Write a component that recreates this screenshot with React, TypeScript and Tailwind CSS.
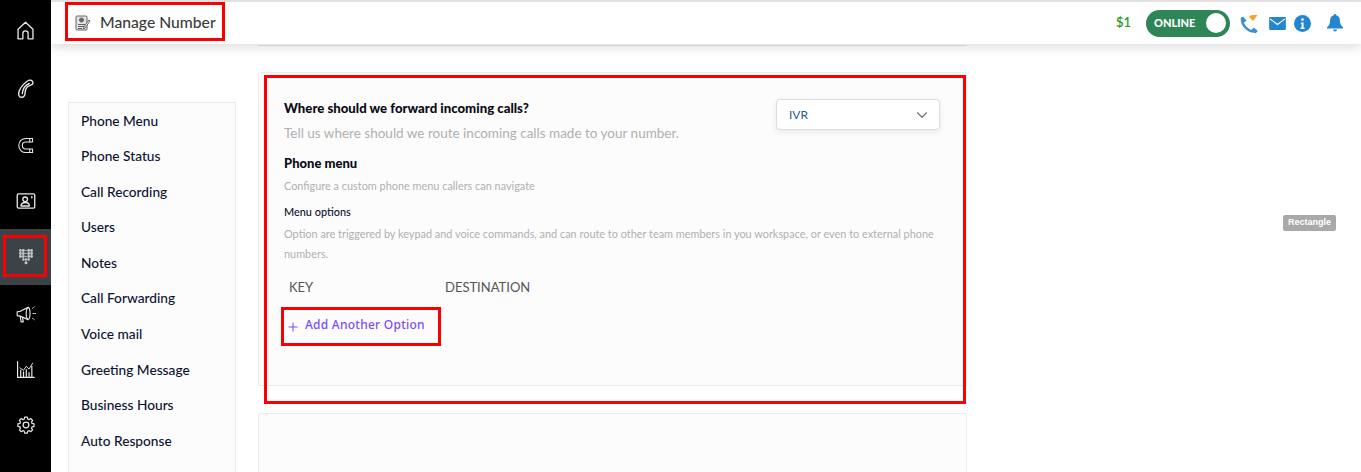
import { ChevronDown, Plus } from 'lucide-react';
import type { ReactNode } from 'react';

const menuItems = [
  'Phone Menu',
  'Phone Status',
  'Call Recording',
  'Users',
  'Notes',
  'Call Forwarding',
  'Voice mail',
  'Greeting Message',
  'Business Hours',
  'Auto Response',
];

function NavIcon({ size = 22, children }: { size?: number; children: ReactNode }) {
  return (
    <svg viewBox="0 0 24 24" width={size} height={size} fill="none" stroke="#e8e8e8" strokeWidth="1.5" strokeLinecap="round" strokeLinejoin="round">
      {children}
    </svg>
  );
}

const navIcons: ReactNode[] = [
  <NavIcon key="home" size={21}>
    <path d="M3.500 21.500V10.500L12 2.500l8.500 8v11h-5.500v-6a3 3 0 0 0-6 0v6H3.500z" />
  </NavIcon>,
  <NavIcon key="phone" size={22}>
    <path d="M14 3c2-1.500 5-.5 5.500 1.500.4 1.800-1.300 3-3 3.500-1.500.5-2.700 1-3.700 2.500-1.500 2-1.800 3.500-1.800 5.500 0 2-.8 4.500-3.300 5-2.500.4-4-1.600-3.700-4.500C5 11 9 6.500 14 3z" />
    <path d="M15.500 6c-3.500 1.500-7 5.500-7.500 11" />
  </NavIcon>,
  <NavIcon key="magnet" size={17}>
    <path d="M22 2h-9.500a10 10 0 0 0 0 20H22v-5h-9.500a5 5 0 0 1 0-10H22V2z" />
    <path d="M18 2v5M18 17v5" />
  </NavIcon>,
  <NavIcon key="contact" size={20}>
    <rect x="1.500" y="3.500" width="21" height="17" rx="1.500" strokeWidth="1.600" />
    <circle cx="11" cy="10" r="2.800" strokeWidth="1.600" />
    <path d="M6 18c0-2.800 2.200-4.200 5-4.200s5 1.400 5 4.200H6zM19 6.500v1.800" strokeWidth="1.600" />
  </NavIcon>,
  <svg key="keypad" viewBox="0 0 14 16" width="14" height="16" fill="#c4c8cc">
    {[1.500, 4.500, 7.500].flatMap((y) =>
      [1.400, 4.300, 9.700, 12.600].map((x) => <circle key={`${x}-${y}`} cx={x} cy={y} r="1.400" />),
    )}
    {[1.500, 4.500, 7.500].map((y) => (
      <circle key={y} cx="7" cy={y} r="0.800" />
    ))}
    <circle cx="4.300" cy="10.500" r="1.300" />
    <circle cx="7" cy="10.500" r="1.300" />
    <circle cx="9.700" cy="10.500" r="1.300" />
    <circle cx="7" cy="13.800" r="1.500" />
  </svg>,
  <NavIcon key="megaphone" size={21}>
    <path d="M2.500 10v4.500l3.500.5 9 4c1.500-1 2.200-4 2.200-7S16.500 5.500 15 5L6 9.500 2.500 10z" strokeWidth="1.300" />
    <path d="M15 5c-1.500 1-2.200 4-2.200 7s.7 6 2.200 7M6 15.500 7 21.500h2.500l-1-5" strokeWidth="1.300" />
    <path d="m20 6 2-1.500M20.500 12h3M20 17.500l2 1.500" strokeWidth="1.100" strokeDasharray="1 1.200" />
  </NavIcon>,
  <NavIcon key="chart" size={19}>
    <path d="M2 2v20h21" />
    <path d="M6 21v-8M9.500 21v-6M13 21v-9M16.500 21v-5M20 21V8" />
    <path d="m5 10 4.500 3 3.500-5 3.500 3.500L21 4" strokeWidth="1.200" />
  </NavIcon>,
  <NavIcon key="gear" size={18}>
    <path d="M10 1.500h4l.6 3 2 .9 2.600-1.700 2.800 2.800-1.700 2.600.9 2 3 .6v4l-3 .6-.9 2 1.700 2.600-2.800 2.800-2.600-1.700-2 .9-.6 3h-4l-.6-3-2-.9-2.600 1.700-2.800-2.800 1.700-2.600-.9-2-3-.6v-4l3-.6.9-2-1.700-2.600 2.800-2.800 2.600 1.700 2-.9.600-3z" transform="translate(12 12) scale(.88) translate(-12 -13.500)" strokeWidth="1.800" />
    <circle cx="12" cy="12" r="3.800" strokeWidth="1.700" />
  </NavIcon>,
];

function Sidebar() {
  return (
    <aside className="flex h-full w-[51px] shrink-0 flex-col bg-black pt-[2px]">
      {navIcons.map((icon, i) => (
        <div
          key={i}
          className={`flex h-[56px] items-center justify-center ${i === 4 ? 'bg-[#3b4248]' : ''} ${i === 0 ? 'mb-[3px]' : ''}`}
        >
          {icon}
        </div>
      ))}
    </aside>
  );
}

function Header() {
  return (
    <header className="relative z-10 flex h-[44px] shrink-0 items-center border-t-2 border-[#e2e2e2] bg-white pl-[24px] pr-[18px] shadow-[0_3px_10px_rgba(0,0,0,0.14)]">
      <svg viewBox="0 0 16 16" width="16" height="16" fill="none" stroke="#666" strokeWidth="1">
        <rect x="1" y="1" width="11" height="14" rx="1" fill="#e2e2e2" />
        <circle cx="6.500" cy="5" r="2" fill="#666" />
        <path d="M3 9.500h7M3 11.500h6M3 13.500h4" />
        <path d="m15 6-5 7-1.500 1 .3-2 5-7z" fill="#fff" />
      </svg>
      <h1 className="ml-[9px] text-[15.700px] font-medium text-[#3a3a3a]">Manage Number</h1>
      <div className="ml-auto flex items-center">
        <span className="mr-[15px] text-[13px] font-semibold text-[#2a9d1f]">$1</span>
        <div className="mr-[9px] flex h-[27px] w-[84px] items-center justify-between rounded-full bg-[#2e8555] pl-[8px] pr-[4px]">
          <span className="text-[11px] font-black text-white">ONLINE</span>
          <span className="h-[20px] w-[20px] rounded-full bg-white" />
        </div>
        <svg viewBox="0 0 20 20" width="20" height="20" className="mr-[10px] mt-[3px]">
          <path d="M3 3.500C2.500 10 9 17 16 16.500" fill="none" stroke="#3a8fd0" strokeWidth="2.400" strokeLinecap="round" />
          <path d="M1.500 4 4 1.500l3.500 4-2.500 2.300zM12.500 15l2.300-2.500 4 3.500-2.300 2.500z" fill="#3a8fd0" />
          <path d="M10.500 3.500C12.500 1 16.500 .5 19 1.500L14.500 7.500z" fill="#f5a623" transform="translate(-.5 -1.500)" />
        </svg>
        <svg viewBox="0 0 18 14" width="17" height="13" className="mr-[8px]">
          <rect width="18" height="14" rx="1" fill="#2586d0" />
          <path d="m1 2 8 6 8-6" fill="none" stroke="#fff" strokeWidth="1.200" />
        </svg>
        <svg viewBox="0 0 16 16" width="17" height="17" className="mr-[16px]">
          <circle cx="8" cy="8" r="8" fill="#2586d0" />
          <circle cx="8" cy="4.300" r="1.300" fill="#fff" />
          <path d="M6.500 7h2.500v5H10v1.200H6.200V12h1V8.200h-.7z" fill="#fff" />
        </svg>
        <svg viewBox="0 0 16 18" width="16" height="18">
          <path d="M8 0c.8 0 1.200.6 1.200 1.300C11.800 2 13 4 13 7c0 3 1 4.500 3 6.300V14.500H0v-1.200C2 11.500 3 10 3 7c0-3 1.200-5 3.800-5.700C6.800.6 7.200 0 8 0z" fill="#2586d0" />
          <path d="M6 15.500h4a2 2 0 0 1-4 0z" fill="#2586d0" />
        </svg>
      </div>
    </header>
  );
}

function SideMenu() {
  return (
    <nav className="ml-[17px] mt-[58px] h-[400px] w-[168px] shrink-0 border border-[#e9e9e9] bg-[#fcfcfc] pl-[12px]">
      {menuItems.map((item) => (
        <div key={item} className="flex h-[35.600px] items-center text-[13.700px] font-medium text-[#0b1330]">
          {item}
        </div>
      ))}
    </nav>
  );
}

function ForwardCard() {
  return (
    <section className="relative h-[314px] shrink-0 rounded-t-[2px] border border-[#ececec] bg-[#fcfcfc] pl-[25px] pt-[25px]">
      <div className="absolute right-[26px] top-[26px] flex h-[31px] w-[164px] items-center justify-between rounded-[4px] border border-[#dcdcdc] bg-white pl-[12px] pr-[8px] shadow-[0_2px_6px_rgba(0,0,0,0.08)]">
        <span className="text-[12px] text-[#1f5c8f]">IVR</span>
        <ChevronDown size={18} strokeWidth={1.500} color="#707070" />
      </div>
      <h2 className="text-[13.200px] font-black leading-[20px] text-[#0b0b14]">Where should we forward incoming calls?</h2>
      <p className="mt-[5px] text-[13.500px] leading-[20px] text-[#b0b0b0]">Tell us where should we route incoming calls made to your number.</p>
      <h3 className="mt-[10px] text-[13px] font-black leading-[20px] text-[#0b0b14]">Phone menu</h3>
      <p className="mt-[5px] text-[10.900px] leading-[16px] text-[#b0b0b0]">Configure a custom phone menu callers can navigate</p>
      <h4 className="mt-[10px] text-[10.900px] font-medium leading-[16px] text-[#0b1330]">Menu options</h4>
      <p className="mt-[4px] w-[660px] text-[10.900px] leading-[20px] text-[#b0b0b0]">
        Option are triggered by keypad and voice commands, and can route to other team members in you workspace, or even to external phone numbers.
      </p>
      <div className="mt-[13px] flex pl-[5px] text-[13px] leading-[20px] text-[#555555]">
        <span className="w-[156px]">KEY</span>
        <span>DESTINATION</span>
      </div>
      <button type="button" className="mt-[19px] flex items-center gap-[5px] pl-[2px] font-['Noto_Sans',sans-serif] text-[12px] font-medium leading-[18px] tracking-[0.25px] text-[#7c4dff]">
        <Plus size={14} strokeWidth={1.800} className="mt-[3px]" />
        Add Another Option
      </button>
    </section>
  );
}

export default function App() {
  return (
    <div className="relative flex h-[472px] w-[1361px] overflow-hidden bg-white font-['Lato',sans-serif]">
      <Sidebar />
      <main className="flex min-w-0 flex-1 flex-col">
        <Header />
        <div className="flex min-h-0 flex-1">
          <SideMenu />
          <div className="ml-[22px] flex w-[709px] shrink-0 flex-col">
            <div className="h-[2px] shrink-0 border-b border-[#e6e6e6]" />
            <div className="h-[26px] shrink-0" />
            <ForwardCard />
            <div className="mt-[27px] h-[100px] shrink-0 rounded-t-[2px] border border-[#ececec] bg-[#fcfcfc]" />
          </div>
        </div>
      </main>
      {/* annotation boxes drawn over the screenshot */}
      <div className="absolute left-[65px] top-[2px] z-20 h-[39px] w-[160px] border-[3px] border-[#fb0000]" />
      <div className="absolute left-[3px] top-[235px] z-20 h-[42px] w-[44px] border-[3px] border-[#fb0000]" />
      <div className="absolute left-[264px] top-[75px] z-20 h-[329px] w-[702px] border-[3px] border-[#fb0000]" />
      <div className="absolute left-[281px] top-[307px] z-20 h-[39px] w-[160px] border-[3px] border-[#fb0000]" />
      <div className="absolute left-[1283px] top-[215px] flex h-[16px] w-[53px] items-center justify-center rounded-[2px] bg-[#a9a9a9] font-['Liberation_Sans',sans-serif] text-[9px] font-bold text-white">
        Rectangle
      </div>
    </div>
  );
}
